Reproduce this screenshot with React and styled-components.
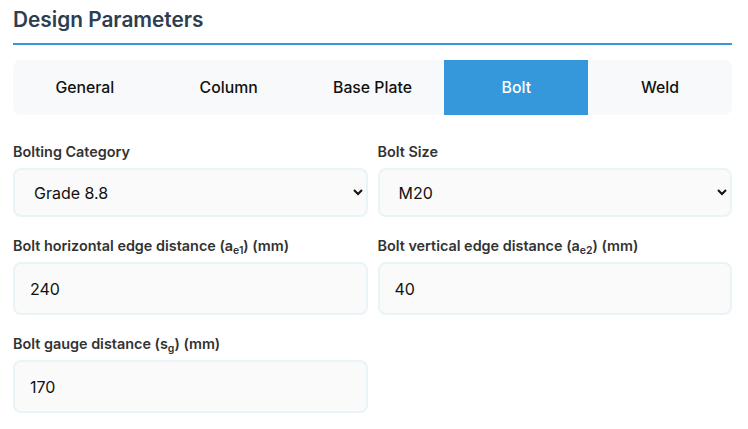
import React, { useState } from "react";
import styled, { createGlobalStyle } from "styled-components";

const GlobalStyle = createGlobalStyle`
  body {
    margin: 0;
    background: #fff;
    font-family: Inter, "Noto Sans", sans-serif;
  }
`;

const Panel = styled.div`
  padding: 8px 16px 0 13px;
`;

const Heading = styled.h2`
  margin: 0;
  padding-bottom: 11px;
  font-size: 20.8px;
  line-height: 24px;
  font-weight: 600;
  color: #2c3e50;
  border-bottom: 2px solid #3498db;
`;

const Tabs = styled.div`
  display: grid;
  grid-template-columns: repeat(5, 1fr);
  margin-top: 15px;
  background: #f8f9fa;
  border-radius: 8px;
  overflow: hidden;
`;

const Tab = styled.button`
  height: 55px;
  border: none;
  padding: 0;
  font-family: inherit;
  font-size: 15.8px;
  font-weight: 500;
  cursor: pointer;
  background: ${(p) => (p.$active ? "#3498db" : "transparent")};
  color: ${(p) => (p.$active ? "#fff" : "#111")};
`;

const Form = styled.div`
  display: grid;
  grid-template-columns: 1fr 1fr;
  column-gap: 10px;
  margin-top: 28px;
`;

const Group = styled.div`
  margin-bottom: 20px;
`;

const Label = styled.label`
  display: block;
  margin-bottom: 8px;
  font-size: 14.4px;
  line-height: 17px;
  font-weight: 600;
  color: #333;

  sub {
    font-size: 10.5px;
    line-height: 0;
    vertical-align: -3px;
  }
`;

const Select = styled.select`
  width: 100%;
  height: 49px;
  box-sizing: border-box;
  padding: 0 12px 0 15px;
  border: 2px solid #e8f4f8;
  border-radius: 8px;
  background: #fafafa;
  font-family: inherit;
  font-size: 16px;
  color: #111;
  outline: none;
`;

const Input = styled.input`
  width: 100%;
  height: 53px;
  box-sizing: border-box;
  padding: 0 15px;
  border: 2px solid #e8f4f8;
  border-radius: 8px;
  background: #fafafa;
  font-family: inherit;
  font-size: 16px;
  color: #111;
  outline: none;
`;

const tabs = ["General", "Column", "Base Plate", "Bolt", "Weld"];

const App = () => {
  const [active, setActive] = useState("Bolt");
  const [category, setCategory] = useState("Grade 8.8");
  const [size, setSize] = useState("M20");
  const [ae1, setAe1] = useState("240");
  const [ae2, setAe2] = useState("40");
  const [sg, setSg] = useState("170");

  return (
    <Panel>
      <GlobalStyle />
      <Heading>Design Parameters</Heading>
      <Tabs>
        {tabs.map((t) => (
          <Tab key={t} $active={t === active} onClick={() => setActive(t)}>
            {t}
          </Tab>
        ))}
      </Tabs>
      <Form>
        <Group>
          <Label>Bolting Category</Label>
          <Select value={category} onChange={(e) => setCategory(e.target.value)}>
            <option>Grade 4.6</option>
            <option>Grade 8.8</option>
            <option>Grade 10.9</option>
          </Select>
        </Group>
        <Group>
          <Label>Bolt Size</Label>
          <Select value={size} onChange={(e) => setSize(e.target.value)}>
            <option>M16</option>
            <option>M20</option>
            <option>M24</option>
          </Select>
        </Group>
        <Group>
          <Label>
            Bolt horizontal edge distance (a<sub>e1</sub>) (mm)
          </Label>
          <Input value={ae1} onChange={(e) => setAe1(e.target.value)} />
        </Group>
        <Group>
          <Label>
            Bolt vertical edge distance (a<sub>e2</sub>) (mm)
          </Label>
          <Input value={ae2} onChange={(e) => setAe2(e.target.value)} />
        </Group>
        <Group>
          <Label>
            Bolt gauge distance (s<sub>g</sub>) (mm)
          </Label>
          <Input value={sg} onChange={(e) => setSg(e.target.value)} />
        </Group>
      </Form>
    </Panel>
  );
};

export default App;
